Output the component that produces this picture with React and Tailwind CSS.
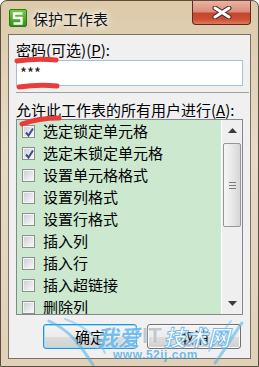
import React from 'react';

const items = [
  { label: '选定锁定单元格', checked: true },
  { label: '选定未锁定单元格', checked: true },
  { label: '设置单元格格式', checked: false },
  { label: '设置列格式', checked: false },
  { label: '设置行格式', checked: false },
  { label: '插入列', checked: false },
  { label: '插入行', checked: false },
  { label: '插入超链接', checked: false },
  { label: '删除列', checked: false },
];

const Checkbox = ({ checked }) => (
  <span className="w-[13px] h-[13px] shrink-0 border border-[#8e8f8f] bg-[#f4f4f4] p-[1px]">
    <span className="block w-full h-full bg-gradient-to-br from-[#cdd1d6] to-[#f7f7f7]">
      {checked && (
        <svg width="11" height="11" viewBox="0 0 11 11">
          <path d="M2 5.5 L4.5 8.5 L9 1.5" fill="none" stroke="#3b4f86" strokeWidth="2" />
        </svg>
      )}
    </span>
  </span>
);

const WpsIcon = () => (
  <div className="w-[18px] h-[18px] rounded-[2px] bg-gradient-to-b from-[#7cc84a] to-[#2f8f17] border border-[#2a7a12] flex items-center justify-center">
    <svg width="12" height="13" viewBox="0 0 12 13">
      <path d="M10.5 1.5 H2 V6 H9.5 V11.5 H1.5" fill="none" stroke="#fff" strokeWidth="2.4" />
    </svg>
  </div>
);

const Watermark = () => (
  <div className="absolute inset-0 pointer-events-none">
    <svg width="259" height="367" className="absolute inset-0">
      <path d="M48 320 C70 330 80 345 92 364" fill="none" stroke="#4fb0ea" strokeOpacity="0.55" strokeWidth="3" strokeLinecap="round" />
      <path d="M64 318 C86 326 98 338 104 352" fill="none" stroke="#4fb0ea" strokeOpacity="0.4" strokeWidth="2" strokeLinecap="round" />
      <path d="M241 322 C232 334 226 346 214 362" fill="none" stroke="#4fb0ea" strokeOpacity="0.55" strokeWidth="3" strokeLinecap="round" />
      <path d="M230 320 C222 330 216 338 208 350" fill="none" stroke="#4fb0ea" strokeOpacity="0.4" strokeWidth="2" strokeLinecap="round" />
    </svg>
    <div className="absolute left-[95px] top-[322px] flex items-end text-[22px] leading-[26px] font-bold italic [text-shadow:0_0_2px_#fff]">
      <span className="text-[#3aa2e6]/70">我爱</span>
      <span className="text-[#9aa4ac]/60 not-italic font-['Liberation_Sans',sans-serif] mx-[2px]">IT</span>
      <span className="text-white/40 [-webkit-text-stroke:1px_rgba(58,162,230,0.7)]">技术网</span>
    </div>
    <div className="absolute left-[112px] top-[348px] text-[12px] leading-[12px] font-bold tracking-[0.5px] text-[#3aa2e6]/70 font-['Liberation_Sans',sans-serif]">
      www.52ij.com
    </div>
  </div>
);

export default function App() {
  return (
    <div className="relative w-[259px] h-[367px] overflow-hidden flex flex-col rounded-t-[7px] border border-[#5b4e3f] bg-[linear-gradient(to_bottom,#dccaa9,#e7dbc7_40%,#e0d1b8)] font-['Noto_Sans_CJK_SC',sans-serif] text-black">
      {/* title bar */}
      <div className="h-[33px] flex shrink-0">
        <div className="ml-[8px] mt-[8px]">
          <WpsIcon />
        </div>
        <div className="ml-[6px] mt-[9px] text-[15px] leading-[18px] text-[#111] [text-shadow:0_0_6px_#fff,0_0_10px_#fff]">
          保护工作表
        </div>
        <div className="flex-1" />
        <div className="mr-[7px] w-[59px] h-[24px] rounded-b-[4px] border border-t-0 border-[#5e2b22] bg-[linear-gradient(to_bottom,#eab3a4_0%,#dc8c79_48%,#c4452c_52%,#cc5036_80%,#e07a5c_100%)] flex items-center justify-center">
          <svg width="20" height="13" viewBox="0 0 20 13">
            <path d="M3 2 L17 11 M17 2 L3 11" stroke="#4a2a22" strokeWidth="5" strokeLinecap="round" />
            <path d="M3 2 L17 11 M17 2 L3 11" stroke="#fff" strokeWidth="3" strokeLinecap="round" />
          </svg>
        </div>
      </div>

      {/* middle */}
      <div className="h-[325px] flex shrink-0">
        <div className="w-[7px]" />
        <div className="w-[243px] border border-[#7c7262] bg-[#f0f0f0] flex flex-col px-[7px] text-[15px] leading-[18px]">
          <div className="mt-[6px] h-[18px]">
            密码(可选)(<span className="underline">P</span>):
          </div>
          <div className="mt-[1px] h-[26px] border border-[#a3c2dc] bg-white px-[3px] flex items-center text-[15px] text-[#1a1a1a]">
            <span className="-mt-[1px]">***</span>
          </div>
          <div className="mt-[6px] h-[1px] bg-[#a0a0a0] mr-[-6px]" />
          <div className="mt-[8px] h-[18px] whitespace-nowrap">
            允许此工作表的所有用户进行(<span className="underline">A</span>):
          </div>
          <div className="h-[196px] border border-[#828790] flex overflow-hidden">
            <div className="flex-1 bg-[#cce8cf] overflow-hidden">
              {items.map((it) => (
                <div key={it.label} className="h-[22px] flex items-center pl-[5px] gap-[8px] whitespace-nowrap">
                  <Checkbox checked={it.checked} />
                  <span>{it.label}</span>
                </div>
              ))}
            </div>
            <div className="w-[21px] bg-[#efefef] border-l border-white flex flex-col">
              <div className="h-[21px] flex items-center justify-center">
                <svg width="9" height="5" viewBox="0 0 9 5"><path d="M0 5 L4.5 0 L9 5 Z" fill="#3c3c3c" /></svg>
              </div>
              <div className="mt-[2px] mx-[1px] h-[84px] rounded-[2px] border border-[#979797] bg-[linear-gradient(to_right,#f6f6f6,#eaeaea_45%,#d6d6d6)] flex flex-col items-center justify-center gap-[2px]">
                <div className="w-[7px] h-[1px] bg-[#7a7a7a]" />
                <div className="w-[7px] h-[1px] bg-[#7a7a7a]" />
                <div className="w-[7px] h-[1px] bg-[#7a7a7a]" />
              </div>
              <div className="flex-1" />
              <div className="h-[21px] flex items-center justify-center">
                <svg width="9" height="5" viewBox="0 0 9 5"><path d="M0 0 L4.5 5 L9 0 Z" fill="#3c3c3c" /></svg>
              </div>
            </div>
          </div>
          <div className="mt-[9px] flex gap-[10px] pl-[27px]">
            <button className="w-[94px] h-[25px] rounded-[3px] border border-[#2f8fd4] shadow-[inset_0_0_0_1px_#8fe0fb] bg-[linear-gradient(to_bottom,#f4f4f4_0%,#ececec_50%,#dddddd_51%,#d0d0d0_100%)] text-[15px] leading-[18px]">
              确定
            </button>
            <button className="w-[94px] h-[25px] rounded-[3px] border border-[#707070] shadow-[inset_0_0_0_1px_#fbfbfb] bg-[linear-gradient(to_bottom,#f4f4f4_0%,#ececec_50%,#dddddd_51%,#d0d0d0_100%)] text-[15px] leading-[18px]">
              取消
            </button>
          </div>
        </div>
        <div className="w-[7px]" />
      </div>
      <div className="flex-1" />

      {/* red marker strokes */}
      <svg width="259" height="367" className="absolute inset-0 pointer-events-none">
        <path d="M16 60 C30 58 44 58 55 59" fill="none" stroke="#ea3b3b" strokeWidth="5" strokeLinecap="round" />
        <path d="M18 86 C32 84 46 84 56 85" fill="none" stroke="#ea3b3b" strokeWidth="5" strokeLinecap="round" />
        <path d="M21 123 C32 119 46 117 58 117" fill="none" stroke="#ea3b3b" strokeWidth="5" strokeLinecap="round" />
      </svg>

      <Watermark />
    </div>
  );
}
